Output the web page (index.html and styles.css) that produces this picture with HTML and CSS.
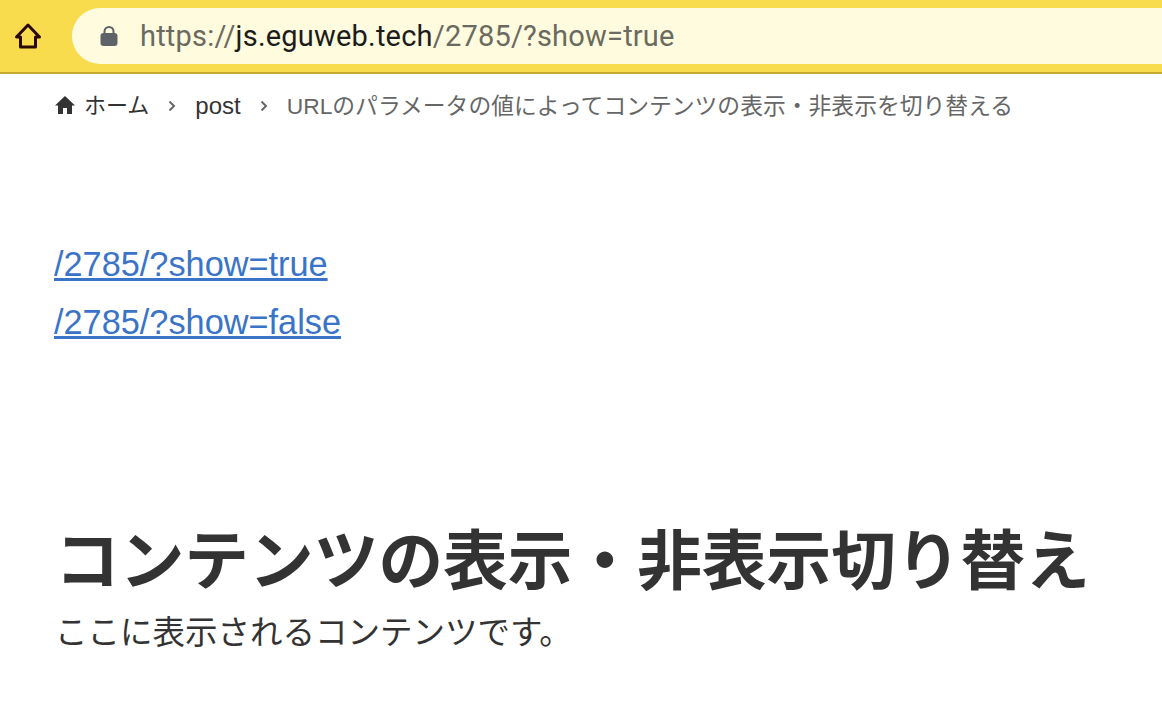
FILE: index.html
```html
<!DOCTYPE html>
<html lang="ja">
<head>
  <meta charset="UTF-8" />
  <title>URLのパラメータの値によってコンテンツの表示・非表示を切り替える</title>
  <link rel="stylesheet" href="styles.css">
</head>
<body>
  <!-- Browser bar -->
  <div class="toolbar">
    <div class="home-btn">
      <svg width="28" height="28" viewBox="0 0 28 28" fill="none" stroke="#2a0a00" stroke-width="3" stroke-linejoin="round" stroke-linecap="round">
        <path d="M14 3 2.5 15H6.5V25H21.5V15H25.5Z"/>
      </svg>
    </div>
    <div class="address">
      <svg class="lock" width="18" height="20" viewBox="0 0 18 20">
        <path d="M4.5 8V5.5a4.5 4.5 0 0 1 9 0V8" fill="none" stroke="#5f6368" stroke-width="2"/>
        <rect x="0.5" y="7" width="17" height="13" rx="3" fill="#5f6368"/>
      </svg>
      <span class="url">https://<b>js.eguweb.tech</b>/2785/?show=true</span>
    </div>
  </div>

  <!-- Breadcrumb -->
  <div class="breadcrumb">
    <svg class="crumb-home" width="20" height="18" viewBox="0 0 20 18">
      <path d="M10 0 0 9.5H3V18H8V12H12V18H17V9.5H20Z" fill="#333"/>
    </svg>
    <a class="crumb">ホーム</a>
    <span class="sep">
      <svg width="8" height="10" viewBox="0 0 8 10" fill="none" stroke="#666" stroke-width="2"><path d="M1.5 0.5 6 5 1.5 9.5"/></svg>
    </span>
    <a class="crumb crumb-post">post</a>
    <span class="sep">
      <svg width="8" height="10" viewBox="0 0 8 10" fill="none" stroke="#666" stroke-width="2"><path d="M1.5 0.5 6 5 1.5 9.5"/></svg>
    </span>
    <span class="crumb-current">URLのパラメータの値によってコンテンツの表示・非表示を切り替える</span>
  </div>

  <!-- Links -->
  <div class="links">
    <p><a href="#">/2785/?show=true</a></p>
    <p><a href="#">/2785/?show=false</a></p>
  </div>

  <!-- Content -->
  <div class="content">
    <h1>コンテンツの表示・非表示切り替え</h1>
    <p>ここに表示されるコンテンツです。</p>
  </div>
</body>
</html>
```

FILE: styles.css
```css
body {
  margin: 0;
  background-color: #fff;
  color: #333;
  font-family: "Liberation Sans", "Noto Sans CJK JP", sans-serif;
  overflow: hidden;
}

/* Browser bar */
.toolbar {
  display: flex;
  align-items: center;
  height: 72px;
  padding-left: 14px;
  background-color: #f9dc4e;
  border-bottom: 2px solid #c9aa2e;
}

.home-btn {
  display: flex;
  width: 58px;
}

.address {
  display: flex;
  align-items: center;
  flex: 1;
  height: 56px;
  padding-left: 28px;
  background-color: #fefbdf;
  border-radius: 28px 0 0 28px;
}

.lock {
  margin-right: 22px;
}

.url {
  font-family: Roboto, "Liberation Sans", sans-serif;
  font-size: 29px;
  letter-spacing: 0.2px;
  color: #6b6a60;
}

.url b {
  font-weight: 400;
  color: #1c1c1c;
}

/* Breadcrumb */
.breadcrumb {
  display: flex;
  align-items: center;
  height: 64px;
  padding-left: 54px;
  font-size: 22px;
  line-height: 30px;
}

.crumb-home {
  margin: 0 9px 2px 1px;
}

.crumb {
  color: #333;
}

.crumb-post {
  font-size: 24px;
}

.sep {
  display: flex;
  justify-content: center;
  width: 46px;
}

.crumb-current {
  color: #666;
  font-size: 22.8px;
}

/* Links */
.links {
  padding: 97px 0 0 54px;
  font-size: 34.3px;
  line-height: 58px;
}

.links p {
  margin: 0;
}

.links a {
  color: #3a74c8;
}

/* Content */
.content {
  padding: 171px 0 0 55px;
}

.content h1 {
  margin: 0;
  font-size: 64.7px;
  line-height: 80px;
  font-weight: 700;
  color: #333;
}

.content p {
  margin: 0;
  font-size: 32.5px;
  line-height: 62px;
}
```
